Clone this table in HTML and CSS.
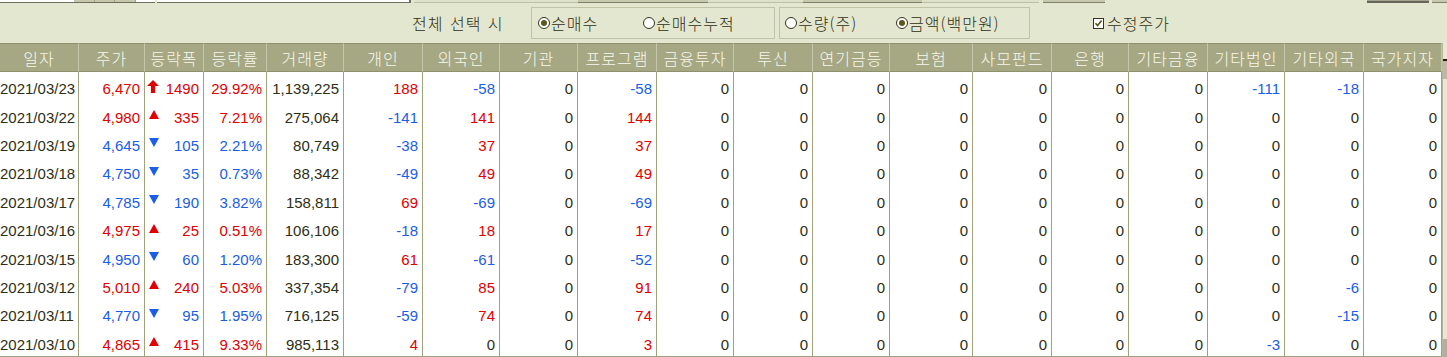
FILE: index.html
```html
<!DOCTYPE html>
<html lang="ko">
<head>
<meta charset="utf-8">
<title>투자자별 매매동향</title>
<link rel="stylesheet" href="styles.css">
</head>
<body>
<div class="top">
  <div class="tb tb-a"><span class="btns"><i></i><i></i><i></i></span></div>
  <div class="tb tb-b"></div>
  <div class="tb tb-c"><span class="dk dk1"></span><span class="dk dk2"></span></div>
  <div class="tb tb-d"></div>
  <div class="tb tb-e"></div>
  <div class="tb tb-f"></div>
</div>
<div class="opts">
  <span class="lbl">전체 선택 시</span>
  <div class="group g1">
    <label class="radio w1"><span class="rb on"></span>순매수</label>
    <label class="radio"><span class="rb"></span>순매수누적</label>
  </div>
  <div class="group g2">
    <label class="radio w2"><span class="rb"></span>수량(주)</label>
    <label class="radio"><span class="rb on"></span>금액(백만원)</label>
  </div>
  <label class="chk"><span class="cb"><svg width="9" height="9" viewBox="0 0 9 9"><path d="M1.5 4.2L3.6 6.6L7.6 1.6" fill="none" stroke="#55531c" stroke-width="1.6"/></svg></span>수정주가</label>
</div>
<div class="table">
  <div class="grid">
    <div class="h">일자</div><div class="h">주가</div><div class="h">등락폭</div><div class="h">등락률</div><div class="h">거래량</div><div class="h">개인</div><div class="h">외국인</div><div class="h">기관</div><div class="h">프로그램</div><div class="h">금융투자</div><div class="h">투신</div><div class="h">연기금등</div><div class="h">보험</div><div class="h">사모펀드</div><div class="h">은행</div><div class="h">기타금융</div><div class="h">기타법인</div><div class="h">기타외국</div><div class="h">국가지자</div>

    <div class="c d">2021/03/23</div><div class="c r">6,470</div><div class="c a r"><svg class="ar big" width="12" height="13" viewBox="0 0 12 13"><path d="M6 0L12 6H8.1V13H3.9V6H0Z" fill="#e00000"/></svg><span>1490</span></div><div class="c r">29.92%</div><div class="c">1,139,225</div><div class="c r">188</div><div class="c b">-58</div><div class="c">0</div><div class="c b">-58</div><div class="c">0</div><div class="c">0</div><div class="c">0</div><div class="c">0</div><div class="c">0</div><div class="c">0</div><div class="c">0</div><div class="c b">-111</div><div class="c b">-18</div><div class="c">0</div>

    <div class="c d">2021/03/22</div><div class="c r">4,980</div><div class="c a r"><svg class="ar" width="10" height="9" viewBox="0 0 10 9"><path d="M5 0L10 9H0Z" fill="#e00000"/></svg><span>335</span></div><div class="c r">7.21%</div><div class="c">275,064</div><div class="c b">-141</div><div class="c r">141</div><div class="c">0</div><div class="c r">144</div><div class="c">0</div><div class="c">0</div><div class="c">0</div><div class="c">0</div><div class="c">0</div><div class="c">0</div><div class="c">0</div><div class="c">0</div><div class="c">0</div><div class="c">0</div>

    <div class="c d">2021/03/19</div><div class="c b">4,645</div><div class="c a b"><svg class="ar" width="10" height="9" viewBox="0 0 10 9"><path d="M0 0H10L5 9Z" fill="#1a5de6"/></svg><span>105</span></div><div class="c b">2.21%</div><div class="c">80,749</div><div class="c b">-38</div><div class="c r">37</div><div class="c">0</div><div class="c r">37</div><div class="c">0</div><div class="c">0</div><div class="c">0</div><div class="c">0</div><div class="c">0</div><div class="c">0</div><div class="c">0</div><div class="c">0</div><div class="c">0</div><div class="c">0</div>

    <div class="c d">2021/03/18</div><div class="c b">4,750</div><div class="c a b"><svg class="ar" width="10" height="9" viewBox="0 0 10 9"><path d="M0 0H10L5 9Z" fill="#1a5de6"/></svg><span>35</span></div><div class="c b">0.73%</div><div class="c">88,342</div><div class="c b">-49</div><div class="c r">49</div><div class="c">0</div><div class="c r">49</div><div class="c">0</div><div class="c">0</div><div class="c">0</div><div class="c">0</div><div class="c">0</div><div class="c">0</div><div class="c">0</div><div class="c">0</div><div class="c">0</div><div class="c">0</div>

    <div class="c d">2021/03/17</div><div class="c b">4,785</div><div class="c a b"><svg class="ar" width="10" height="9" viewBox="0 0 10 9"><path d="M0 0H10L5 9Z" fill="#1a5de6"/></svg><span>190</span></div><div class="c b">3.82%</div><div class="c">158,811</div><div class="c r">69</div><div class="c b">-69</div><div class="c">0</div><div class="c b">-69</div><div class="c">0</div><div class="c">0</div><div class="c">0</div><div class="c">0</div><div class="c">0</div><div class="c">0</div><div class="c">0</div><div class="c">0</div><div class="c">0</div><div class="c">0</div>

    <div class="c d">2021/03/16</div><div class="c r">4,975</div><div class="c a r"><svg class="ar" width="10" height="9" viewBox="0 0 10 9"><path d="M5 0L10 9H0Z" fill="#e00000"/></svg><span>25</span></div><div class="c r">0.51%</div><div class="c">106,106</div><div class="c b">-18</div><div class="c r">18</div><div class="c">0</div><div class="c r">17</div><div class="c">0</div><div class="c">0</div><div class="c">0</div><div class="c">0</div><div class="c">0</div><div class="c">0</div><div class="c">0</div><div class="c">0</div><div class="c">0</div><div class="c">0</div>

    <div class="c d">2021/03/15</div><div class="c b">4,950</div><div class="c a b"><svg class="ar" width="10" height="9" viewBox="0 0 10 9"><path d="M0 0H10L5 9Z" fill="#1a5de6"/></svg><span>60</span></div><div class="c b">1.20%</div><div class="c">183,300</div><div class="c r">61</div><div class="c b">-61</div><div class="c">0</div><div class="c b">-52</div><div class="c">0</div><div class="c">0</div><div class="c">0</div><div class="c">0</div><div class="c">0</div><div class="c">0</div><div class="c">0</div><div class="c">0</div><div class="c">0</div><div class="c">0</div>

    <div class="c d">2021/03/12</div><div class="c r">5,010</div><div class="c a r"><svg class="ar" width="10" height="9" viewBox="0 0 10 9"><path d="M5 0L10 9H0Z" fill="#e00000"/></svg><span>240</span></div><div class="c r">5.03%</div><div class="c">337,354</div><div class="c b">-79</div><div class="c r">85</div><div class="c">0</div><div class="c r">91</div><div class="c">0</div><div class="c">0</div><div class="c">0</div><div class="c">0</div><div class="c">0</div><div class="c">0</div><div class="c">0</div><div class="c">0</div><div class="c b">-6</div><div class="c">0</div>

    <div class="c d">2021/03/11</div><div class="c b">4,770</div><div class="c a b"><svg class="ar" width="10" height="9" viewBox="0 0 10 9"><path d="M0 0H10L5 9Z" fill="#1a5de6"/></svg><span>95</span></div><div class="c b">1.95%</div><div class="c">716,125</div><div class="c b">-59</div><div class="c r">74</div><div class="c">0</div><div class="c r">74</div><div class="c">0</div><div class="c">0</div><div class="c">0</div><div class="c">0</div><div class="c">0</div><div class="c">0</div><div class="c">0</div><div class="c">0</div><div class="c b">-15</div><div class="c">0</div>

    <div class="c d">2021/03/10</div><div class="c r">4,865</div><div class="c a r"><svg class="ar" width="10" height="9" viewBox="0 0 10 9"><path d="M5 0L10 9H0Z" fill="#e00000"/></svg><span>415</span></div><div class="c r">9.33%</div><div class="c">985,113</div><div class="c r">4</div><div class="c">0</div><div class="c">0</div><div class="c r">3</div><div class="c">0</div><div class="c">0</div><div class="c">0</div><div class="c">0</div><div class="c">0</div><div class="c">0</div><div class="c">0</div><div class="c b">-3</div><div class="c">0</div><div class="c">0</div>
  </div>
  <div class="sb"><span class="sb-dash"></span><span class="sb-t1"></span><span class="sb-t2"></span></div>
</div>
</body>
</html>
```

FILE: styles.css
```css
* { box-sizing: border-box; }
html, body { margin: 0; padding: 0; }
body {
  width: 1447px;
  height: 357px;
  overflow: hidden;
  background: #e4e7cf;
  color: #2e2e14;
  font-family: "Noto Sans CJK KR", "Liberation Sans", sans-serif;
}

/* top strip: bottoms of controls cut off */
.top { display: flex; align-items: flex-start; height: 5px; }
.tb { height: 3px; }
.tb-a { width: 155px; background: #fff; border-bottom: 1px solid #6e6f5a; display: flex; }
.btns { margin-left: 74px; width: 62px; display: flex; }
.btns i { flex: 1; background: #c6c8ae; border-right: 1px solid #a3a58b; }
.tb-b { margin-left: 2px; width: 254px; background: #fff; border-bottom: 1px solid #6e6f5a; border-right: 2px solid #6e6f5a; }
.tb-c { margin-left: 3px; width: 625px; background: #dfe2ca; border-bottom: 1px solid #bdbfa4; display: flex; }
.dk { height: 3px; background: #c7c9ae; border-bottom: 1px solid #7f806a; }
.dk1 { margin-left: 164px; width: 130px; }
.dk2 { margin-left: 95px; width: 119px; }
.tb-d { margin-left: 4px; width: 62px; background: #c7c9ae; border-bottom: 1px solid #7f806a; }
.tb-e { margin-left: 262px; width: 62px; background: #a2a38a; border-bottom: 2px solid #66675a; }
.tb-f { margin-left: 3px; width: 15px; background: #c7c9ae; border-bottom: 1px solid #7f806a; }

/* options bar */
.opts { display: flex; align-items: flex-start; height: 38px; padding-top: 2px; font-weight: 300; }
.lbl {
  margin-left: 412px;
  width: 119px;
  height: 32px;
  line-height: 32px;
  font-size: 16px;
  letter-spacing: 1px;
  word-spacing: 1px;
}
.group { height: 32px; border: 1px solid #c1c3a8; display: flex; align-items: center; }
.g1 { width: 244px; padding-left: 6px; }
.g2 { margin-left: 4px; width: 251px; padding-left: 5px; }
.radio { display: flex; align-items: center; font-size: 16px; letter-spacing: 1px; }
.w1 { width: 105px; }
.w2 { width: 111px; }
.rb {
  width: 12px;
  height: 12px;
  border: 1px solid #34341c;
  border-radius: 50%;
  background: #fff;
  margin-right: 1px;
  display: flex;
  align-items: center;
  justify-content: center;
}
.rb.on::after { content: ""; width: 6px; height: 6px; border-radius: 50%; background: #5a581f; }
.chk { margin-left: 63px; height: 32px; display: flex; align-items: center; font-size: 16px; letter-spacing: 1px; }
.cb {
  width: 11px;
  height: 11px;
  border: 1px solid #34341c;
  background: #fff;
  margin-right: 3px;
  display: flex;
  align-items: center;
  justify-content: center;
}

/* grid */
.table { display: flex; }
.grid {
  display: grid;
  width: 1442px;
  grid-template-columns: 79px 66px 59px 63px 77px 79px 77px 78px 79px 77px 79px 77px 83px 79px 77px 79px 77px 79px 78px;
  grid-template-rows: 29px repeat(10, 28.4px);
  background: #fff;
  border-bottom: 1px solid #a0a27b;
}
.h {
  background: #a6a883;
  color: #f7f7ee;
  border-top: 1px solid #8f916e;
  border-bottom: 1px solid #8f916e;
  border-right: 1px solid #c5c7ac;
  font-size: 16px;
  font-weight: 300;
  letter-spacing: 1px;
  display: flex;
  align-items: center;
  justify-content: center;
  white-space: nowrap;
}
.c {
  border-right: 1px solid #a0a27b;
  font-family: "Liberation Sans", "Arial", sans-serif;
  font-size: 15px;
  display: flex;
  align-items: center;
  justify-content: flex-end;
  padding-right: 4px;
  padding-top: 5px;
  white-space: nowrap;
}
.c.d { justify-content: flex-start; padding-right: 0; padding-left: 0; }
.c.a { justify-content: space-between; padding-left: 4px; }
.ar { margin-top: -5px; }
.ar.big { margin-left: -2px; }
.r { color: #e00000; }
.b { color: #1a5de6; }

/* scrollbar remnant */
.sb {
  width: 5px;
  height: 314px;
  background: #e7e9d5;
  border-left: 1px solid #b5b79c;
  display: flex;
  flex-direction: column;
}
.sb-dash { margin-top: 16px; height: 2px; background: #1d1d10; }
.sb-t1 { height: 18px; background: #b9bba6; }
.sb-t2 { margin-top: auto; height: 18px; background: #aeb0a0; }
```
